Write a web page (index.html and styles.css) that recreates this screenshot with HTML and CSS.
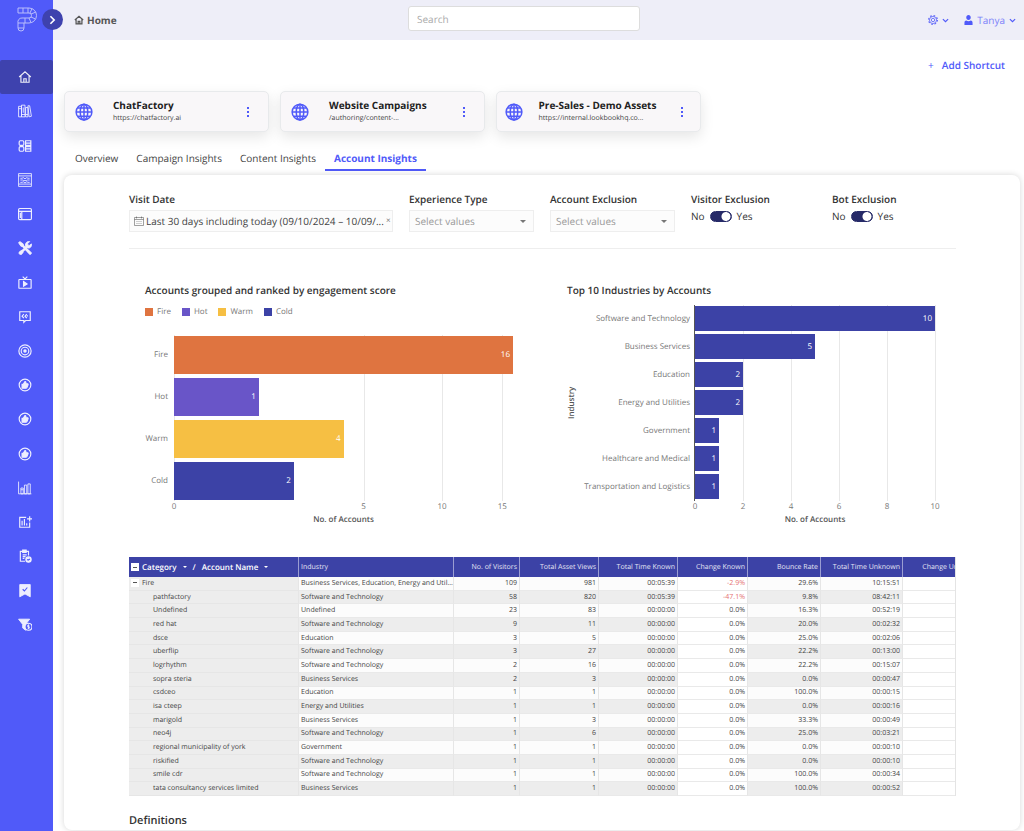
FILE: index.html
```
<!DOCTYPE html>
<html lang="en">
<head>
<meta charset="utf-8">
<title>Home</title>
<link rel="stylesheet" href="styles.css">
</head>
<body>
<svg class="defs" aria-hidden="true">
  <symbol id="i-home" viewBox="0 0 24 24"><path d="M2 12 12 3l10 9M5 10v11h14V10M10 21v-6h4v6"/></symbol>
  <symbol id="i-globe" viewBox="0 0 24 24"><circle cx="12" cy="12" r="10.5"/><ellipse cx="12" cy="12" rx="5" ry="10.5"/><path d="M12 1.500v21M1.500 12h21M3.500 6.500h17M3.500 17.500h17"/></symbol>
  <symbol id="i-down" viewBox="0 0 12 8"><path d="M1.500 1.500 6 6l4.500-4.500"/></symbol>
  <symbol id="i-like" viewBox="0 0 24 24"><circle cx="12" cy="12" r="10"/><path class="solid" d="M7 11h2l3-5c1.500 0 2 1.500 1 4h3.500c1 0 1 1.500.5 2l-1.500 4c-.3.800-1 1.500-2 1.500H7z"/></symbol>
</svg>
<div class="app">
  <aside class="sidebar">
    <a class="logo" href="#" aria-label="Start">
      <svg viewBox="0 0 22 26"><path d="M1 1h11a7 7 0 0 1 0 15H7v5a3 3 0 0 1-6 0v-5a4 4 0 0 1 4-5h7a2 2 0 0 0 0-5H1zM6 1v5M11 1v5M15 1.500 13 6M19 5l-5 2M18.500 12 14 10M14 15.500 12 11M8 11v5M1 16h6M1 21h6"/></svg>
    </a>
    <button class="expand" type="button" aria-label="Expand menu"><svg viewBox="0 0 8 12"><path d="m1.500 1.500 4.500 4.500-4.500 4.500"/></svg></button>
    <nav class="menu">
      <a class="item active" href="#" aria-label="Home"><svg class="icon bold"><use href="#i-home"/></svg></a>
      <a class="item" href="#" aria-label="Library"><svg class="icon" viewBox="0 0 24 24"><path d="M1 4h5v18H1zM6 2h6v20H6zM13 6h4v16h-4zM17 3h3l3 18-4 1zM1 8h5M9 6v9M6 18h6M13 18h4"/></svg></a>
      <a class="item" href="#" aria-label="Tracks"><svg class="icon bold" viewBox="0 0 24 24"><rect x="2" y="3" width="8" height="8" rx="2"/><rect x="2" y="13" width="8" height="8" rx="2"/><path d="M13 3h9v4h-9zM13 7h9v4h-9zM13 13h9v4h-9zM13 17h9v4h-9z"/></svg></a>
      <a class="item" href="#" aria-label="Forms"><svg class="icon" viewBox="0 0 24 24"><path d="M1 1h22v22H1z"/><path d="M1 5h22M1 19h22M4 9h3l2-1 3 2 3-2 2 1h3M4 12h4l2 1h4l2-1h4M4 16h3l2-1 3 2 3-2 2 1h3"/></svg></a>
      <a class="item" href="#" aria-label="Pages"><svg class="icon bold" viewBox="0 0 24 24"><rect x="1" y="2.500" width="22" height="19" rx="2"/><path d="M1 7.500h22M6.500 7.500v14M4 10v9"/></svg></a>
      <a class="item" href="#" aria-label="Tools"><svg class="icon" viewBox="0 0 24 24"><path class="thick" d="m7 7 12 12M5 20 15 10"/><path class="solid" d="m1 3 2-2 6 4v4H5zM14 16l2-2 7 6c0 2-1 3-3 3zM20 1l-4 4 3 3 4-3c1 4-2 8-6 7-4-1-5-4-4-7s4-5 7-4zM2 19l4-3 3 3-3 4c-3 1-5-1-4-4z"/></svg></a>
      <a class="item" href="#" aria-label="Video"><svg class="icon bold" viewBox="0 0 24 24"><rect x="1.500" y="6" width="21" height="15" rx="1"/><path d="m8 1 4 4 4-4"/><path class="solid" d="m9.500 9.500 6 4-6 4z"/></svg></a>
      <a class="item" href="#" aria-label="Messages"><svg class="icon bold" viewBox="0 0 24 24"><path d="M3 3h18v15h-8l-3 3v-3H3z"/><path d="m10 7-3 3.500 3 3.500M15 7l-3 3.500 3 3.500M15 10h2"/></svg></a>
      <a class="item" href="#" aria-label="Goals"><svg class="icon bold" viewBox="0 0 24 24"><circle cx="12" cy="12" r="10.500"/><circle cx="12" cy="12" r="6.500"/><circle class="solid" cx="12" cy="12" r="2"/></svg></a>
      <a class="item" href="#" aria-label="Engagement"><svg class="icon bold"><use href="#i-like"/></svg></a>
      <a class="item" href="#" aria-label="Recommendations"><svg class="icon bold"><use href="#i-like"/></svg></a>
      <a class="item" href="#" aria-label="Feedback"><svg class="icon bold"><use href="#i-like"/></svg></a>
      <a class="item" href="#" aria-label="Charts"><svg class="icon" viewBox="0 0 24 24"><path d="M1 1v21h22M5 12h4v10H5zM11 7h4v15h-4zM17 5h4v17h-4zM5 15h4"/></svg></a>
      <a class="item" href="#" aria-label="Add report"><svg class="icon bold" viewBox="0 0 24 24"><path d="M14 4H3v17h17v-8M7 10v8M11 7v11M15 14v4M20 2v9M15.500 6.500H24"/></svg></a>
      <a class="item" href="#" aria-label="Scheduled reports"><svg class="icon bold" viewBox="0 0 24 24"><path d="M12 21H4V4h14v7M8 2h6v4H8zM8 10h7M8 13h5M8 16h3"/><circle class="solid" cx="18" cy="18" r="4.500"/><path class="cut" d="m15.500 18 2 1 3-2"/></svg></a>
      <a class="item" href="#" aria-label="Saved"><svg class="icon" viewBox="0 0 24 24"><path class="solid" d="M3 1h18v21l-9-5-9 5z"/><path class="cut" d="m8 9 3 3 5-6"/></svg></a>
      <a class="item" href="#" aria-label="Filters"><svg class="icon" viewBox="0 0 24 24"><path class="solid" d="M1 2h19l-7 9v10l-5-4v-6z"/><circle class="ring" cx="18" cy="15" r="6"/><path d="M19.500 12.500h-3v2.500h3v2.500h-3M18 11v8"/></svg></a>
    </nav>
  </aside>

  <div class="main">
    <header class="topbar">
      <a class="crumb" href="#"><svg><use href="#i-home"/></svg>Home</a>
      <input class="search" type="search" placeholder="Search" aria-label="Search">
      <div class="account">
        <button class="drop" type="button" aria-label="Settings"><svg class="gear" viewBox="0 0 24 24"><circle class="teeth" cx="12" cy="12" r="10.500"/><circle cx="12" cy="12" r="8.500"/><circle cx="12" cy="12" r="4"/></svg><svg class="down"><use href="#i-down"/></svg></button>
        <button class="drop" type="button"><svg class="person" viewBox="0 0 20 22"><path d="M10 0c3 0 5 2 5 5.500S13 11 10 11 5 9 5 5.500 7 0 10 0zM1 22v-5c0-3 2-5 4-5 3 2 7 2 10 0 2 0 4 2 4 5v5z"/></svg>Tanya<svg class="down"><use href="#i-down"/></svg></button>
      </div>
    </header>

    <main class="content">
      <div class="actions"><button class="add" type="button"><span class="plus">+</span>Add Shortcut</button></div>
      <div class="cards">
        <article class="card"><svg class="globe"><use href="#i-globe"/></svg><div class="card-text"><h2>ChatFactory</h2><p>https://chatfactory.ai</p></div><button class="dots" type="button" aria-label="ChatFactory options"><i></i><i></i><i></i></button></article>
        <article class="card"><svg class="globe"><use href="#i-globe"/></svg><div class="card-text"><h2>Website Campaigns</h2><p>/authoring/content-...</p></div><button class="dots" type="button" aria-label="Website Campaigns options"><i></i><i></i><i></i></button></article>
        <article class="card"><svg class="globe"><use href="#i-globe"/></svg><div class="card-text"><h2>Pre-Sales - Demo Assets</h2><p>https://internal.lookbookhq.co...</p></div><button class="dots" type="button" aria-label="Pre-Sales options"><i></i><i></i><i></i></button></article>
      </div>
      <nav class="tabs"><a href="#">Overview</a><a href="#">Campaign Insights</a><a href="#">Content Insights</a><a class="on" href="#">Account Insights</a></nav>

      <section class="panel">
        <div class="filters">
          <div class="field"><label for="date">Visit Date</label>
            <button id="date" class="box date" type="button"><svg viewBox="0 0 20 20"><path d="M1 3h18v16H1zM1 7h18M5 1v4M15 1v4M5 11h2M9 11h2M13 11h2M5 15h2M9 15h2M13 15h2"/></svg><span class="range">Last 30 days including today (09/10/2024 – 10/09/...</span><span class="clear">×</span></button></div>
          <div class="field"><label for="exp">Experience Type</label><div class="pick"><select id="exp" class="box"><option>Select values</option></select></div></div>
          <div class="field"><label for="acc">Account Exclusion</label><div class="pick"><select id="acc" class="box"><option>Select values</option></select></div></div>
          <div class="field"><label for="vis">Visitor Exclusion</label><div class="switch"><span>No</span><input id="vis" type="checkbox" role="switch" checked><span>Yes</span></div></div>
          <div class="field"><label for="bot">Bot Exclusion</label><div class="switch"><span>No</span><input id="bot" type="checkbox" role="switch" checked><span>Yes</span></div></div>
        </div>

        <div class="charts">
          <figure class="chart score">
            <h3>Accounts grouped and ranked by engagement score</h3>
            <ul class="legend"><li class="fire">Fire</li><li class="hot">Hot</li><li class="warm">Warm</li><li class="cold">Cold</li></ul>
            <div class="graph">
              <div class="names"><span>Fire</span><span>Hot</span><span>Warm</span><span>Cold</span></div>
              <div class="plot">
                <i class="line" style="left:0%"></i><i class="line" style="left:55.9%"></i><i class="line" style="left:79.06%"></i><i class="line" style="left:96.82%"></i>
                <div class="bar fire" style="width:100%">16</div><div class="bar hot" style="width:25%">1</div><div class="bar warm" style="width:50%">4</div><div class="bar cold" style="width:35.36%">2</div>
              </div>
              <div class="ticks"><span style="left:0%">0</span><span style="left:55.9%">5</span><span style="left:79.06%">10</span><span style="left:96.82%">15</span></div>
              <div class="axis">No. of Accounts</div>
            </div>
          </figure>
          <figure class="chart industry">
            <h3>Top 10 Industries by Accounts</h3>
            <div class="graph">
              <div class="side">Industry</div>
              <div class="names"><span>Software and Technology</span><span>Business Services</span><span>Education</span><span>Energy and Utilities</span><span>Government</span><span>Healthcare and Medical</span><span>Transportation and Logistics</span></div>
              <div class="plot">
                <i class="line" style="left:20%"></i><i class="line" style="left:40%"></i><i class="line" style="left:60%"></i><i class="line" style="left:80%"></i><i class="line" style="left:100%"></i>
                <div class="bar" style="width:100%">10</div><div class="bar" style="width:50%">5</div><div class="bar" style="width:20%">2</div><div class="bar" style="width:20%">2</div><div class="bar" style="width:10%">1</div><div class="bar" style="width:10%">1</div><div class="bar" style="width:10%">1</div>
              </div>
              <div class="ticks"><span style="left:0%">0</span><span style="left:20%">2</span><span style="left:40%">4</span><span style="left:60%">6</span><span style="left:80%">8</span><span style="left:100%">10</span></div>
              <div class="axis">No. of Accounts</div>
            </div>
          </figure>
        </div>

        <div class="table-wrap">
          <table>
            <colgroup><col class="c1"><col class="c2"><col class="c3"><col class="c4"><col class="c5"><col class="c6"><col class="c7"><col class="c8"><col class="c9"></colgroup>
            <thead><tr><th class="group"><div><button class="fold" type="button" aria-label="Collapse all"></button>Category<i class="caret"></i><span>/</span><span>Account Name</span><i class="caret far"></i></div></th><th class="txt">Industry</th><th>No. of Visitors</th><th>Total Asset Views</th><th>Total Time Known</th><th>Change Known</th><th>Bounce Rate</th><th>Total Time Unknown</th><th>Change Unknown</th></tr></thead>
            <tbody>
              <tr><th class="top"><button class="fold" type="button" aria-label="Collapse Fire"></button>Fire</th><td>Business Services, Education, Energy and Util...</td><td>109</td><td>981</td><td>00:05:39</td><td class="neg">-2.9%</td><td>29.6%</td><td>10:15:51</td><td></td></tr>
              <tr><th>pathfactory</th><td>Software and Technology</td><td>58</td><td>820</td><td>00:05:39</td><td class="neg">-47.1%</td><td>9.8%</td><td>08:42:11</td><td></td></tr>
              <tr><th>Undefined</th><td>Undefined</td><td>23</td><td>83</td><td>00:00:00</td><td>0.0%</td><td>16.3%</td><td>00:52:19</td><td></td></tr>
              <tr><th>red hat</th><td>Software and Technology</td><td>9</td><td>11</td><td>00:00:00</td><td>0.0%</td><td>20.0%</td><td>00:02:32</td><td></td></tr>
              <tr><th>dsce</th><td>Education</td><td>3</td><td>5</td><td>00:00:00</td><td>0.0%</td><td>25.0%</td><td>00:02:06</td><td></td></tr>
              <tr><th>uberflip</th><td>Software and Technology</td><td>3</td><td>27</td><td>00:00:00</td><td>0.0%</td><td>22.2%</td><td>00:13:00</td><td></td></tr>
              <tr><th>logrhythm</th><td>Software and Technology</td><td>2</td><td>16</td><td>00:00:00</td><td>0.0%</td><td>22.2%</td><td>00:15:07</td><td></td></tr>
              <tr><th>sopra steria</th><td>Business Services</td><td>2</td><td>3</td><td>00:00:00</td><td>0.0%</td><td>0.0%</td><td>00:00:47</td><td></td></tr>
              <tr><th>csdceo</th><td>Education</td><td>1</td><td>1</td><td>00:00:00</td><td>0.0%</td><td>100.0%</td><td>00:00:15</td><td></td></tr>
              <tr><th>isa cteep</th><td>Energy and Utilities</td><td>1</td><td>1</td><td>00:00:00</td><td>0.0%</td><td>0.0%</td><td>00:00:16</td><td></td></tr>
              <tr><th>marigold</th><td>Business Services</td><td>1</td><td>3</td><td>00:00:00</td><td>0.0%</td><td>33.3%</td><td>00:00:49</td><td></td></tr>
              <tr><th>neo4j</th><td>Software and Technology</td><td>1</td><td>6</td><td>00:00:00</td><td>0.0%</td><td>25.0%</td><td>00:03:21</td><td></td></tr>
              <tr><th>regional municipality of york</th><td>Government</td><td>1</td><td>1</td><td>00:00:00</td><td>0.0%</td><td>0.0%</td><td>00:00:10</td><td></td></tr>
              <tr><th>riskified</th><td>Software and Technology</td><td>1</td><td>1</td><td>00:00:00</td><td>0.0%</td><td>0.0%</td><td>00:00:10</td><td></td></tr>
              <tr><th>smile cdr</th><td>Software and Technology</td><td>1</td><td>1</td><td>00:00:00</td><td>0.0%</td><td>100.0%</td><td>00:00:34</td><td></td></tr>
              <tr><th>tata consultancy services limited</th><td>Business Services</td><td>1</td><td>1</td><td>00:00:00</td><td>0.0%</td><td>100.0%</td><td>00:00:52</td><td></td></tr>
            </tbody>
          </table>
        </div>
        <h2 class="defs-title">Definitions</h2>
      </section>
    </main>
  </div>
</div>
</body>
</html>
```
FILE: styles.css
```
* { box-sizing: border-box; }
body { margin: 0; background: #fff; color: #444; font: 10px/12px "Open Sans", sans-serif; text-rendering: geometricPrecision; }
h2, h3, p, ul, figure { margin: 0; padding: 0; }
a { color: inherit; text-decoration: none; }
button { border: 0; padding: 0; background: none; color: inherit; font: inherit; text-rendering: inherit; }
input, select { text-rendering: inherit; }
svg { fill: none; stroke: currentColor; stroke-width: 2; display: block; flex: none; }
.defs { position: absolute; width: 0; height: 0; }
.app { display: flex; min-height: 100vh; }

/* Sidebar */
.sidebar { position: relative; width: 53px; flex: none; background: #505af9; color: #fff; }
.logo { display: flex; height: 60px; padding: 7px 0 0 17px; }
.logo svg { width: 22px; height: 26px; stroke-width: 1; opacity: .6; }
.expand { position: absolute; left: 42px; top: 9px; width: 21px; height: 21px; border-radius: 50%; background: #3e42ae; display: grid; place-items: center; }
.expand svg { width: 7px; height: 10px; }
.menu { display: flex; flex-direction: column; justify-content: space-between; height: 582px; }
.item { display: grid; place-items: center; height: 35px; padding-right: 3px; }
.item.active { background: #3e42ae; border-radius: 2px; }
.icon { width: 14px; height: 14px; stroke-width: 1.5; opacity: .9; }
.bold { stroke-width: 2; }
.solid { fill: currentColor; }
.thick { stroke-width: 4; }
.cut { stroke: #505af9; stroke-width: 2; }
.ring { fill: #505af9; stroke-width: 2; }

/* Top bar */
.main { flex: 1; min-width: 0; display: flex; flex-direction: column; }
.topbar { display: grid; grid-template-columns: 355fr 232px 384fr; align-items: center; height: 40px; padding-bottom: 3px; background: #eeeef8; }
.crumb { display: flex; align-items: center; gap: 3px; padding: 3px 0 0 21px; font-weight: 700; color: #555; }
.crumb svg { width: 10px; height: 10px; stroke-width: 3; }
.search { width: 100%; height: 25px; margin: 0; border: 1px solid #ddd; border-radius: 3px; padding: 0 8px; background: #fff; font: inherit; color: #444; }
.search::placeholder { color: #aaa; opacity: 1; }
.account { display: flex; justify-content: flex-end; gap: 15px; padding: 3px 8px 0 0; color: #7d83fa; }
.drop { display: flex; align-items: center; gap: 4px; }
.down { width: 7px; height: 5px; stroke: #505af9; }
.gear { width: 10px; height: 10px; color: #6067f9; }
.teeth { stroke-width: 3; stroke-dasharray: 4 4.250; }
.person { width: 9px; height: 10px; fill: #505af9; stroke: none; }

/* Shortcuts */
.content { flex: 1; display: flex; flex-direction: column; padding: 0 4px 1px 11px; }
.actions { display: flex; justify-content: flex-end; padding: 19px 15px 0 0; height: 51px; align-items: flex-start; }
.add { display: flex; gap: 8px; color: #505af9; font-weight: 600; }
.plus { font-weight: 400; }
.cards { display: flex; gap: 11px; }
.card { display: flex; align-items: center; justify-content: space-around; width: 205px; height: 41px; border: 1px solid #e8eaec; border-radius: 5px; background: #f9f7f9; box-shadow: 0 5px 14px rgba(0, 0, 0, .1); }
.globe { width: 18px; height: 18px; color: #505af9; stroke-width: 2; }
.card-text { min-width: 105px; }
.card h2 { font-size: 10px; line-height: 14px; font-weight: 700; color: #222; }
.card p { font-size: 7px; line-height: 12px; padding-top: 1px; white-space: nowrap; }
.dots { width: 20px; display: flex; flex-direction: column; align-items: center; gap: 2px; }
.dots i { width: 2px; height: 2px; background: #505af9; }

/* Tabs */
.tabs { display: flex; margin-top: 20px; padding-left: 2px; }
.tabs a { padding: 0 9px; height: 19px; }
.tabs .on { color: #505af9; font-weight: 700; border-bottom: 2px solid #505af9; }

/* Panel and filters */
.panel { flex: 1; margin-top: 4px; padding: 18px 64px 1px 65px; border-radius: 8px; box-shadow: 0 0 6px rgba(0, 0, 0, .16); background: #fff; }
.filters { display: grid; grid-template-columns: 264fr 125fr 125fr 125fr 124fr; gap: 16px; padding-bottom: 16px; border-bottom: 1px solid #eee; }
.field { display: flex; flex-direction: column; gap: 5px; min-width: 0; }
.field label { font-weight: 600; color: #333; }
.box { width: 100%; height: 22px; border: 1px solid #eee; background: #fcfcfc; }
.date { display: flex; align-items: center; gap: 2px; padding: 0 2px 0 4px; }
.date svg { width: 10px; height: 10px; stroke-width: 1; }
.range { white-space: nowrap; }
.clear { margin-left: auto; color: #777; font-size: 8px; }
.pick { position: relative; }
.pick::after { content: ""; position: absolute; right: 8px; top: 10px; border: 3px solid transparent; border-top-color: #777; border-bottom: 0; }
select.box { appearance: none; border-radius: 0; padding: 0 5px; color: #999; font: inherit; }
.switch { display: flex; align-items: center; gap: 5px; color: #333; }
.switch input { appearance: none; width: 22px; height: 11px; margin: 0; border: 1px solid #262a68; border-radius: 6px; background: radial-gradient(circle at 15px 50%, #fff 4px, #262a68 5px); }

/* Charts */
.charts { display: grid; grid-template-columns: 422fr 405fr; padding-top: 35px; color: #777; font-size: 8px; }
.chart { padding-left: 16px; }
.score { padding-right: 38px; }
.industry { padding-right: 21px; }
.chart h3 { font-size: 10px; line-height: 12px; font-weight: 600; color: #333; }
.legend { display: flex; gap: 11px; margin: 10px 0 17px; list-style: none; }
.legend li { display: flex; align-items: center; gap: 4px; background: none; }
.legend li::before { content: ""; width: 8px; height: 8px; background: var(--tone); }
.fire { --tone: #df7440; }
.hot { --tone: #6955c8; }
.warm { --tone: #f6bf43; }
.cold { --tone: #3c42a6; }
.graph { display: grid; grid-template-columns: 23px minmax(0, 1fr); column-gap: 6px; }
.industry .graph { grid-template-columns: 10px 113px minmax(0, 1fr); column-gap: 0; margin-top: 9px; }
.names, .plot { display: grid; gap: 4px; padding: 1px 0; }
.names { text-align: right; white-space: nowrap; justify-items: end; }
.names span { align-self: center; }
.score .names, .score .plot { grid-auto-rows: 38px; }
.industry .names, .industry .plot { grid-auto-rows: 25px; gap: 3px; padding-bottom: 2px; }
.plot { position: relative; }
.industry .plot { margin-left: 5px; box-shadow: -1px 0 #555; }
.line { position: absolute; top: 0; bottom: 0; width: 1px; background: #e8e8e8; }
.bar { position: relative; display: flex; align-items: center; justify-content: flex-end; padding-right: 3px; background: var(--tone, #3c42a6); color: #fff; }
.ticks { position: relative; height: 13px; grid-column: -2; }
.industry .ticks, .industry .axis { margin-left: 5px; }
.ticks span { position: absolute; transform: translateX(-50%); }
.axis { grid-column: -2; text-align: center; font-weight: 600; color: #555; }
.side { writing-mode: vertical-rl; transform: rotate(180deg); text-align: center; font-weight: 600; color: #555; line-height: 10px; }

/* Table */
.table-wrap { margin-top: 31px; overflow: hidden; border-right: 1px solid #e4e4e4; }
table { width: 854px; height: 239px; table-layout: fixed; border-collapse: separate; border-spacing: 0; font-size: 7px; line-height: 11px; color: #444; }
.c1 { width: 170px; } .c2 { width: 155px; } .c3 { width: 66px; } .c4 { width: 79px; } .c5 { width: 79px; } .c6 { width: 70px; } .c7 { width: 73px; } .c8 { width: 82px; } .c9 { width: 80px; }
th, td { padding: 0 2px; text-align: right; font-weight: 400; white-space: nowrap; overflow: hidden; border-right: 1px solid #e6e6e6; border-bottom: 1px solid #e9e9e9; }
thead th { height: 20px; background: #3c42a6; color: #e4e4f4; border-right-color: #9a9dd2; border-bottom: 0; }
thead .txt, td:nth-child(2) { text-align: left; }
.group { color: #fff; font-size: 8px; font-weight: 600; }
.group div { display: flex; align-items: center; gap: 6px; }
.fold { width: 8px; height: 8px; background: linear-gradient(#555, #555) center / 4px 1px no-repeat #fff; }
.group .fold { margin-right: -3px; }
.caret { border: 2px solid transparent; border-top-color: #fff; border-bottom: 0; }
tbody tr { background: #fcfcfc; }
tbody tr:nth-child(even) { background: #ededed; }
tbody th { background: #ededed; text-align: left; padding-left: 24px; border-bottom-color: #e6e6e6; }
tbody .top { padding-left: 2px; }
.top .fold { margin-right: 3px; vertical-align: middle; }
td:nth-child(6), td:nth-child(9) { background: #fff; }
.neg { color: #e57373; }
.defs-title { margin-top: 17px; font-size: 11px; line-height: 15px; font-weight: 600; color: #333; }
```
